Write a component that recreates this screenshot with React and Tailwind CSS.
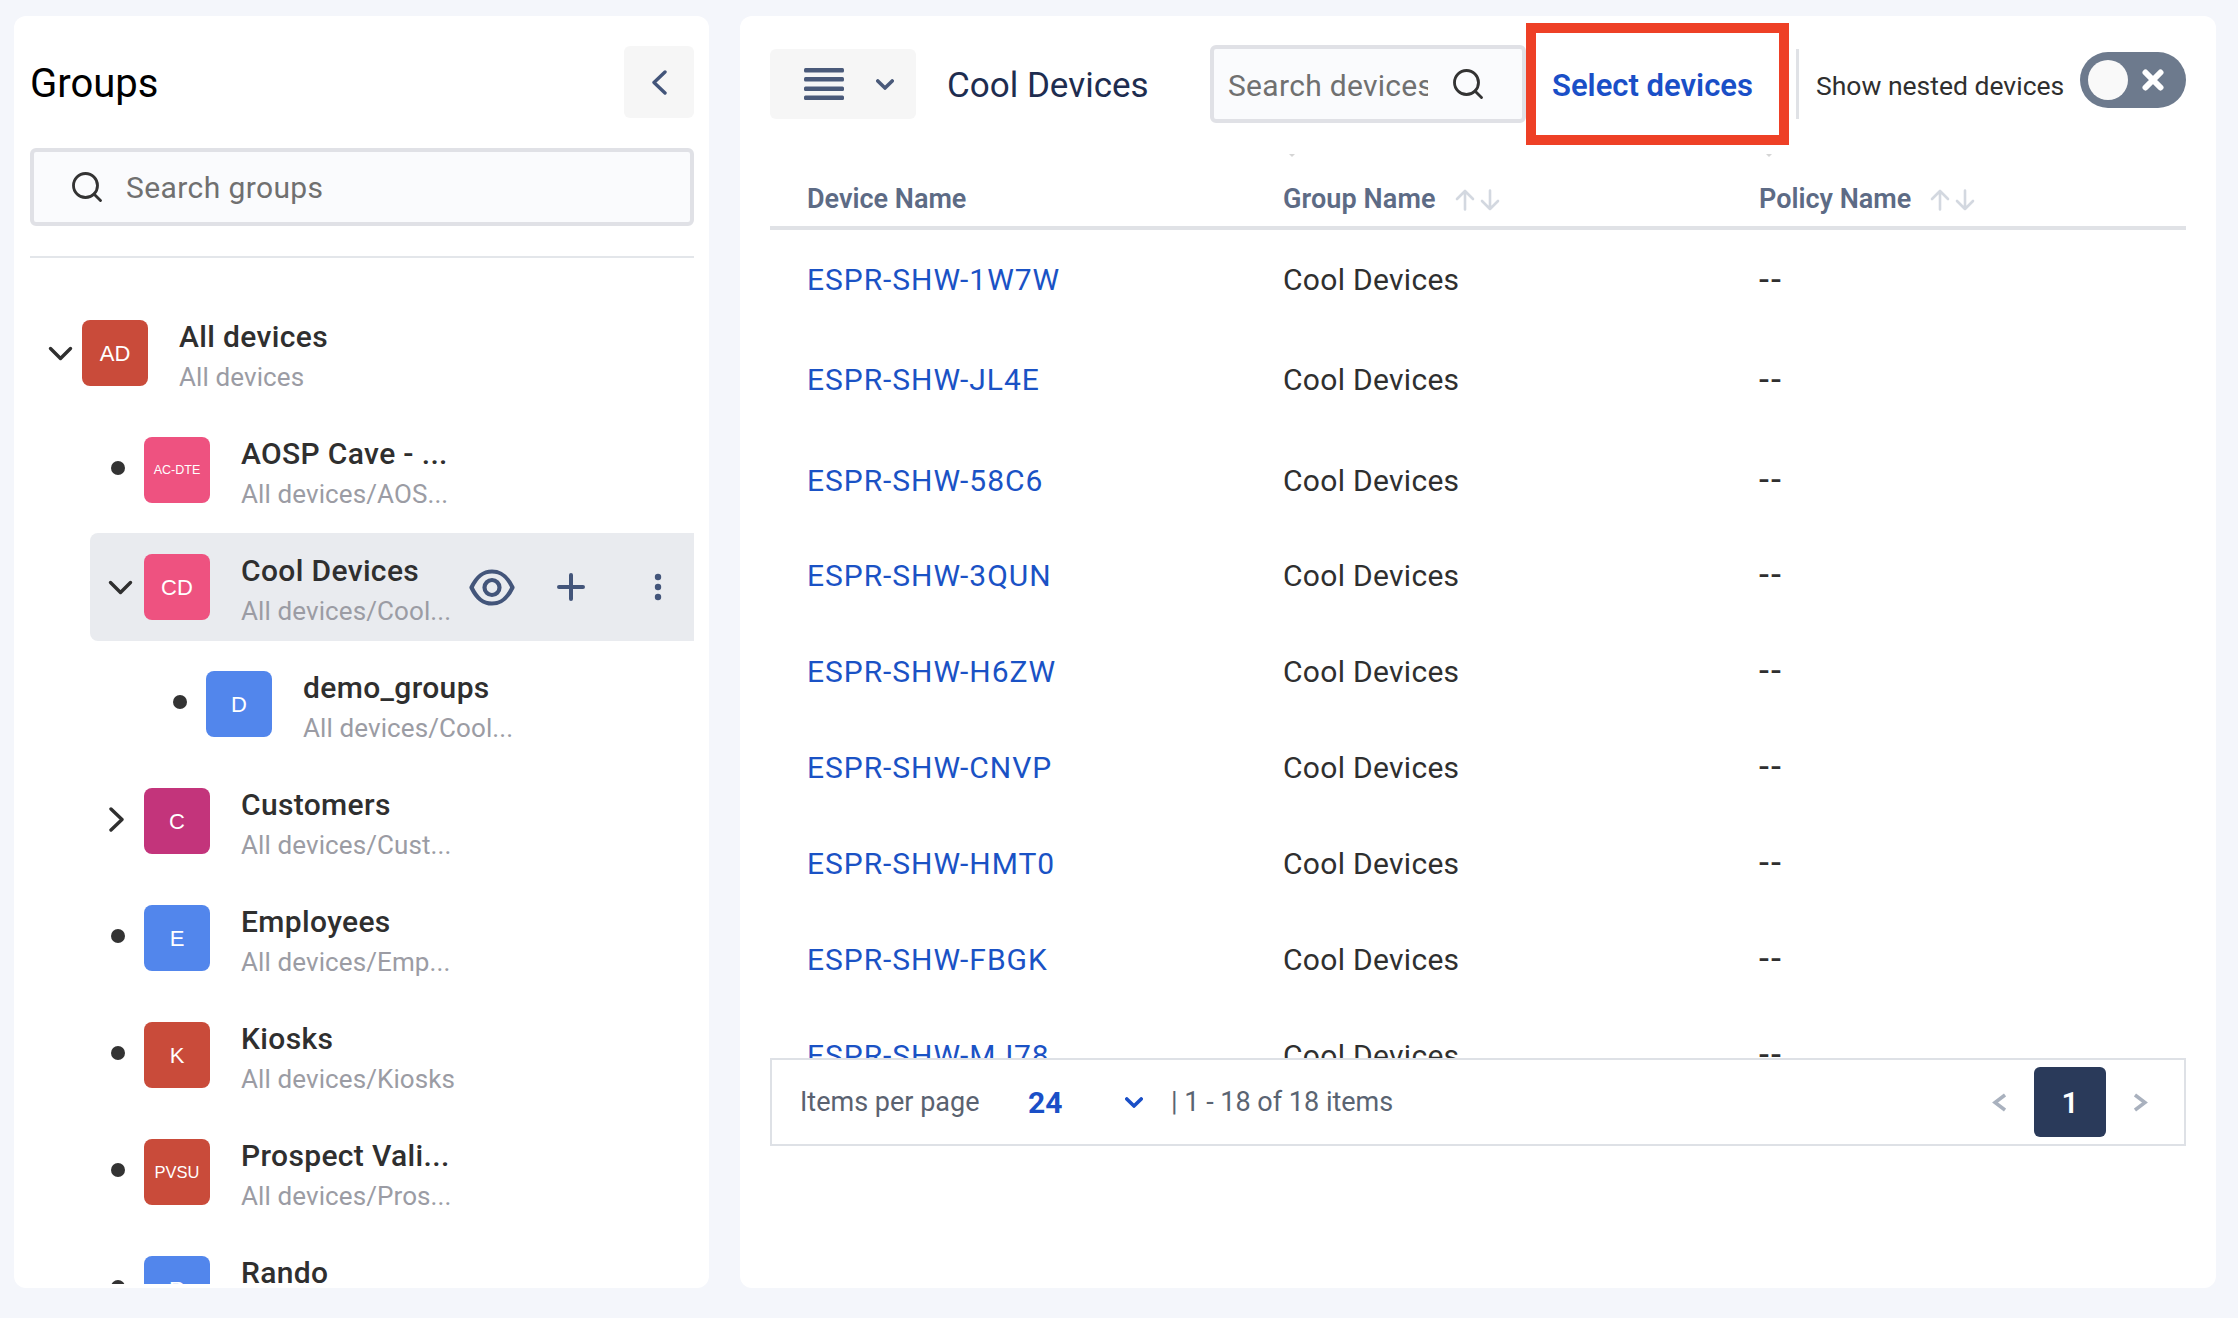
import React from 'react'
import { Search } from 'lucide-react'

const font = { fontFamily: '"Roboto", "Liberation Sans", sans-serif' }

const groups = [
  { id: 'ad', level: 0, tag: 'AD', size: 'text-[22px]', color: 'bg-[#c94b3a]', name: 'All devices', path: 'All devices', state: 'open' },
  { id: 'ac', level: 1, tag: 'AC-DTE', size: 'text-[12.5px]', color: 'bg-[#ee5280]', name: 'AOSP Cave - ...', path: 'All devices/AOS...', state: 'leaf' },
  { id: 'cd', level: 1, tag: 'CD', size: 'text-[22px]', color: 'bg-[#ee5280]', name: 'Cool Devices', path: 'All devices/Cool...', state: 'open', selected: true },
  { id: 'd', level: 2, tag: 'D', size: 'text-[22px]', color: 'bg-[#5286ec]', name: 'demo_groups', path: 'All devices/Cool...', state: 'leaf' },
  { id: 'c', level: 1, tag: 'C', size: 'text-[22px]', color: 'bg-[#c3347b]', name: 'Customers', path: 'All devices/Cust...', state: 'closed' },
  { id: 'e', level: 1, tag: 'E', size: 'text-[22px]', color: 'bg-[#5286ec]', name: 'Employees', path: 'All devices/Emp...', state: 'leaf' },
  { id: 'k', level: 1, tag: 'K', size: 'text-[22px]', color: 'bg-[#c94b3a]', name: 'Kiosks', path: 'All devices/Kiosks', state: 'leaf' },
  { id: 'p', level: 1, tag: 'PVSU', size: 'text-[16.5px]', color: 'bg-[#c94b3a]', name: 'Prospect Vali...', path: 'All devices/Pros...', state: 'leaf' },
  { id: 'r', level: 1, tag: 'R', size: 'text-[22px]', color: 'bg-[#5286ec]', name: 'Rando', path: 'All devices/Rando', state: 'leaf' },
]

const devices = [
  { name: 'ESPR-SHW-1W7W', h: 'h-[99px]' },
  { name: 'ESPR-SHW-JL4E', h: 'h-[101px]' },
  { name: 'ESPR-SHW-58C6', h: 'h-[100px]' },
  { name: 'ESPR-SHW-3QUN', h: 'h-[93px] pb-[3px]' },
  { name: 'ESPR-SHW-H6ZW', h: 'h-[96px]' },
  { name: 'ESPR-SHW-CNVP', h: 'h-[96px]' },
  { name: 'ESPR-SHW-HMT0', h: 'h-[96px]' },
  { name: 'ESPR-SHW-FBGK', h: 'h-[96px]' },
  { name: 'ESPR-SHW-MJ78', h: 'h-[96px]' },
]

const levelClass = ['ml-0', 'ml-[60px]', 'ml-[122px]']

const ChevronDown = ({ className, weight = 3.4 }) => (
  <svg className={className} viewBox="0 0 25 15" fill="none" stroke="currentColor" strokeWidth={weight} strokeLinecap="round" strokeLinejoin="round">
    <path d="M2.500 2.500l10 10 10-10" />
  </svg>
)

const ChevronRight = ({ className }) => (
  <svg className={className} viewBox="0 0 15 25" fill="none" stroke="currentColor" strokeWidth="3.4" strokeLinecap="round" strokeLinejoin="round">
    <path d="M2 2l11 10.500L2 23" />
  </svg>
)

const SortArrows = () => (
  <span className="flex items-center gap-[5px] text-[#d3d8e0]">
    <svg className="w-[20px] h-[22px]" viewBox="0 0 20 22" fill="none" stroke="currentColor" strokeWidth="2.600" strokeLinecap="round" strokeLinejoin="round">
      <path d="M10 20.500V2M2 10l8-8 8 8" />
    </svg>
    <svg className="w-[20px] h-[22px]" viewBox="0 0 20 22" fill="none" stroke="currentColor" strokeWidth="2.600" strokeLinecap="round" strokeLinejoin="round">
      <path d="M10 1.500V20M2 12l8 8 8-8" />
    </svg>
  </span>
)

const GroupRow = ({ group }) => {
  const { level, tag, size, color, name, path, state, selected } = group
  return (
    <div className={`flex items-center h-[108px] shrink-0 rounded-l-lg ${levelClass[level]} ${selected ? 'bg-[#e9ebef]' : ''}`}>
      <div className={`shrink-0 pl-[21px] text-[#2f2f2f] ${level === 0 ? 'w-[52px]' : 'w-[54px]'}`}>
        {state === 'open' && <ChevronDown className="w-[25px] h-[15px] -ml-[3px]" />}
        {state === 'closed' && <ChevronRight className="w-[15px] h-[25px] -ml-[2px] -mt-[3px]" />}
        {state === 'leaf' && <div className="w-[14px] h-[14px] rounded-full bg-[#333333] -mt-[5px]" />}
      </div>
      <div className={`w-[66px] h-[66px] shrink-0 rounded-lg flex items-center justify-center text-white ${color} ${size}`} style={{ fontFamily: '"Liberation Sans", sans-serif' }}>
        {tag}
      </div>
      <div className="ml-[31px] mt-[8px] min-w-0">
        <div className="text-[30px] leading-[40px] font-medium text-[#2f2f2f] whitespace-nowrap tracking-[0.35px]">{name}</div>
        <div className="text-[26px] leading-[40px] text-[#9b9ca4] whitespace-nowrap tracking-[0.1px]">{path}</div>
      </div>
      {selected && (
        <div className="ml-auto flex items-center text-[#43557a]">
          <svg className="w-[46px] h-[37px]" viewBox="0 0 46 37" fill="none" stroke="currentColor" strokeWidth="4.200" strokeLinejoin="round">
            <path d="M2.500 18.500C8 7 14 2.500 23 2.500S38 7 43.500 18.500C38 30 32 34.500 23 34.500S8 30 2.500 18.500Z" />
            <circle cx="23" cy="18.500" r="7.500" />
          </svg>
          <svg className="ml-[42px] w-[28px] h-[28px]" viewBox="0 0 28 28" fill="none" stroke="currentColor" strokeWidth="4" strokeLinecap="round">
            <path d="M14 2v24M2 14h24" />
          </svg>
          <svg className="ml-[67px] mr-[30px] w-[12px] h-[28px]" viewBox="0 0 12 28" fill="currentColor">
            <circle cx="6" cy="4" r="3.200" />
            <circle cx="6" cy="14" r="3.200" />
            <circle cx="6" cy="24" r="3.200" />
          </svg>
        </div>
      )}
    </div>
  )
}

export default function App() {
  return (
    <div className="w-[2238px] h-[1318px] flex gap-[31px] bg-[#f4f6fb] pt-[16px] pb-[30px] pl-[14px] pr-[22px] overflow-hidden" style={font}>
      <aside className="w-[695px] shrink-0 bg-white rounded-xl flex flex-col pl-[16px] pr-[15px] pb-[4px]">
        <div className="flex items-center justify-between pt-[30px]">
          <h1 className="h-[72px] text-[40px] leading-[75px] text-black">Groups</h1>
          <button className="w-[70px] h-[72px] bg-[#f6f6f6] rounded-md flex items-center justify-center text-[#43557a]">
            <ChevronRight className="w-[15px] h-[25px] rotate-180" />
          </button>
        </div>
        <div className="mt-[30px] h-[78px] flex items-center border-4 border-[#e0e1e6] bg-[#fafbfd] rounded-md pl-[35px]">
          <Search size={36} strokeWidth={1.9} className="text-[#333333] shrink-0" />
          <input className="ml-[21px] flex-1 outline-none bg-transparent text-[30px] tracking-[0.4px] placeholder:text-[#707070]" placeholder="Search groups" />
        </div>
        <div className="mt-[30px] h-[2px] bg-[#e3e6ea] shrink-0" />
        <div className="mt-[41px] flex-1 min-h-0 overflow-hidden flex flex-col gap-[9px]">
          {groups.map((g) => <GroupRow key={g.id} group={g} />)}
        </div>
      </aside>

      <main className="relative flex-1 min-w-0 bg-white rounded-xl flex flex-col px-[30px]">
        <div className="flex items-center h-[122px] mt-[7px] shrink-0">
          <button className="w-[146px] h-[70px] bg-[#f6f6f6] rounded-md flex items-center pl-[34px] text-[#4a5a7a]">
            <svg className="w-[40px] h-[32px]" viewBox="0 0 40 32" fill="currentColor">
              <rect y="0" width="40" height="4.500" rx="1.500" />
              <rect y="9" width="40" height="4.500" rx="1.500" />
              <rect y="18.500" width="40" height="4.500" rx="1.500" />
              <rect y="27.500" width="40" height="4.500" rx="1.500" />
            </svg>
            <ChevronDown className="ml-[32px] w-[18px] h-[11px]" weight={5} />
          </button>
          <div className="ml-[31px] w-[263px] mt-[5px] text-[35px] text-[#1e2d50]">Cool Devices</div>
          <div className="w-[316px] h-[78px] flex items-center border-4 border-[#e0e1e6] bg-[#fafbfd] rounded-md pl-[14px]">
            <input className="w-[200px] mt-[2px] outline-none bg-transparent text-[30px] tracking-[0.3px] placeholder:text-[#707070]" placeholder="Search devices" />
            <Search size={36} strokeWidth={1.9} className="ml-[22px] text-[#333333] shrink-0" />
          </div>
          <button className="w-[263px] h-[122px] border-[10px] border-[#ee4026] pl-[16px] pt-[4px] text-left text-[31px] font-semibold text-[#1a4fc7]">Select devices</button>
          <div className="ml-[7px] w-[3px] h-[70px] bg-[#e0e2e6]" />
          <span className="ml-[17px] w-[264px] mt-[3px] text-[26.5px] text-[#2f2f2f] whitespace-nowrap">Show nested devices</span>
          <div className="w-[106px] h-[56px] -mt-[8px] rounded-full bg-[#6d7a8d] flex items-center pl-[8px]">
            <div className="w-[40px] h-[40px] rounded-full bg-[#f9f9f9]" />
            <svg className="ml-[14px] w-[22px] h-[22px]" viewBox="0 0 22 22" fill="none" stroke="white" strokeWidth="6" strokeLinecap="round">
              <path d="M3.500 3.500l15 15M18.500 3.500l-15 15" />
            </svg>
          </div>
        </div>

        {/* stray tooltip tips peeking under the toolbar */}
        <div className="absolute left-[549px] top-[138px] border-x-[3px] border-t-[3px] border-x-transparent border-t-[#d5d5d5]" />
        <div className="absolute left-[1026px] top-[138px] border-x-[3px] border-t-[3px] border-x-transparent border-t-[#d5d5d5]" />

        <div className="h-[913px] shrink-0 overflow-hidden">
          <div className="grid grid-cols-[476px_476px_1fr] pl-[37px] h-[85px] pt-[28px] items-center border-b-4 border-[#e0e2e6] text-[27px] font-semibold text-[#5d6b85]">
            <div>Device Name</div>
            <div className="flex items-center gap-[19px] tracking-[0.1px]">Group Name <SortArrows /></div>
            <div className="flex items-center gap-[19px]">Policy Name <SortArrows /></div>
          </div>
          {devices.map((d) => (
            <div key={d.name} className={`grid grid-cols-[476px_476px_1fr] pl-[37px] items-center text-[30px] ${d.h}`}>
              <a className="text-[#1a52c5] tracking-[0.95px]">{d.name}</a>
              <div className="text-[#2f2f2f] tracking-[0.3px]">Cool Devices</div>
              <div className="text-[36px] leading-[40px] tracking-[2px] text-[#2f2f2f]">--</div>
            </div>
          ))}
        </div>

        <div className="h-[88px] shrink-0 border-2 border-[#dee1e6] flex items-center pl-[28px] pr-[36px]">
          <span className="w-[228px] text-[27px] text-[#5a6270]">Items per page</span>
          <span className="w-[97px] text-[30px] font-bold text-[#1a4fc7]">24</span>
          <ChevronDown className="w-[18px] h-[11px] text-[#1a4fc7]" weight={5} />
          <span className="ml-[28px] text-[27px] text-[#5a6472]">| 1 - 18 of 18 items</span>
          <div className="ml-auto flex items-center">
            <span className="text-[#a9b1be]">
              <svg className="w-[14px] h-[19px]" viewBox="0 0 14 19" fill="none" stroke="currentColor" strokeWidth="3.500">
                <path d="M13 2L3 9.500 13 17" />
              </svg>
            </span>
            <button className="ml-[28px] w-[72px] h-[70px] rounded-md bg-[#2a3a5a] text-white text-[30px] font-semibold">1</button>
            <span className="ml-[28px] text-[#a9b1be]">
              <svg className="w-[14px] h-[19px]" viewBox="0 0 14 19" fill="none" stroke="currentColor" strokeWidth="3.500">
                <path d="M1 2l10 7.500L1 17" />
              </svg>
            </span>
          </div>
        </div>
      </main>
    </div>
  )
}
